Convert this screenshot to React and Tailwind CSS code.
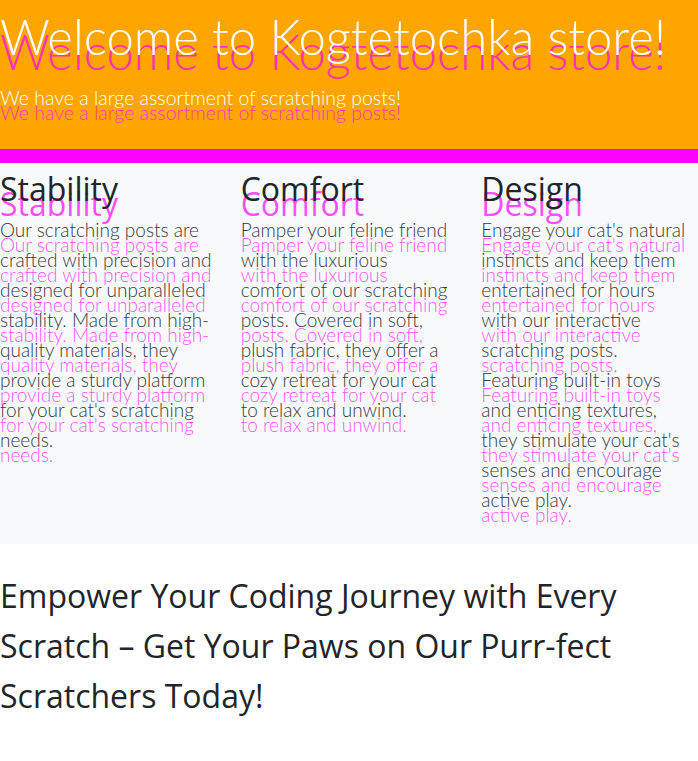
import React from 'react'

const ghost = '[text-shadow:0_15px_0_rgba(255,0,255,0.7)]'

const features = [
    {
        title: 'Stability',
        text: "Our scratching posts are crafted with precision and designed for unparalleled stability. Made from high-quality materials, they provide a sturdy platform for your cat's scratching needs.",
    },
    {
        title: 'Comfort',
        text: 'Pamper your feline friend with the luxurious comfort of our scratching posts. Covered in soft, plush fabric, they offer a cozy retreat for your cat to relax and unwind.',
    },
    {
        title: 'Design',
        text: "Engage your cat's natural instincts and keep them entertained for hours with our interactive scratching posts. Featuring built-in toys and enticing textures, they stimulate your cat's senses and encourage active play.",
    },
]

const Feature = ({ title, text }) => {
    return (
        <div className="flex flex-col">
            <h2
                className={`font-['Open_Sans',sans-serif] text-[32px] leading-[40px] font-normal text-[#212529] ${ghost}`}
            >
                {title}
            </h2>
            <p
                className={`mt-[6px] w-[212px] text-[19px] leading-[30px] font-light text-[#343a40] ${ghost}`}
            >
                {text}
            </p>
        </div>
    )
}

const App = () => {
    return (
        <div className="min-h-screen bg-white font-['Lato',sans-serif]">
            <header className="bg-[#ffa500] h-[149px] pt-[6px]">
                <h1
                    className={`text-[49px] leading-[60px] font-light text-white whitespace-nowrap ${ghost}`}
                >
                    Welcome to Kogtetochka store!
                </h1>
                <p
                    className={`mt-[20px] text-[19.5px] leading-[24px] font-light text-white ${ghost}`}
                >
                    We have a large assortment of scratching posts!
                </p>
            </header>
            <div className="h-[14px] bg-[#ff00ff]"></div>
            <section className="bg-[#f8f9fa] pt-[6px] pb-[29px]">
                <div className="grid grid-cols-3 gap-6">
                    {features.map((f) => (
                        <Feature key={f.title} title={f.title} text={f.text} />
                    ))}
                </div>
            </section>
            <div className="pt-[27px]">
                <p className="font-['Open_Sans',sans-serif] text-[32px] leading-[50px] text-[#212529]">
                    Empower Your Coding Journey with Every Scratch – Get Your
                    Paws on Our Purr-fect Scratchers Today!
                </p>
            </div>
        </div>
    )
}

export default App
